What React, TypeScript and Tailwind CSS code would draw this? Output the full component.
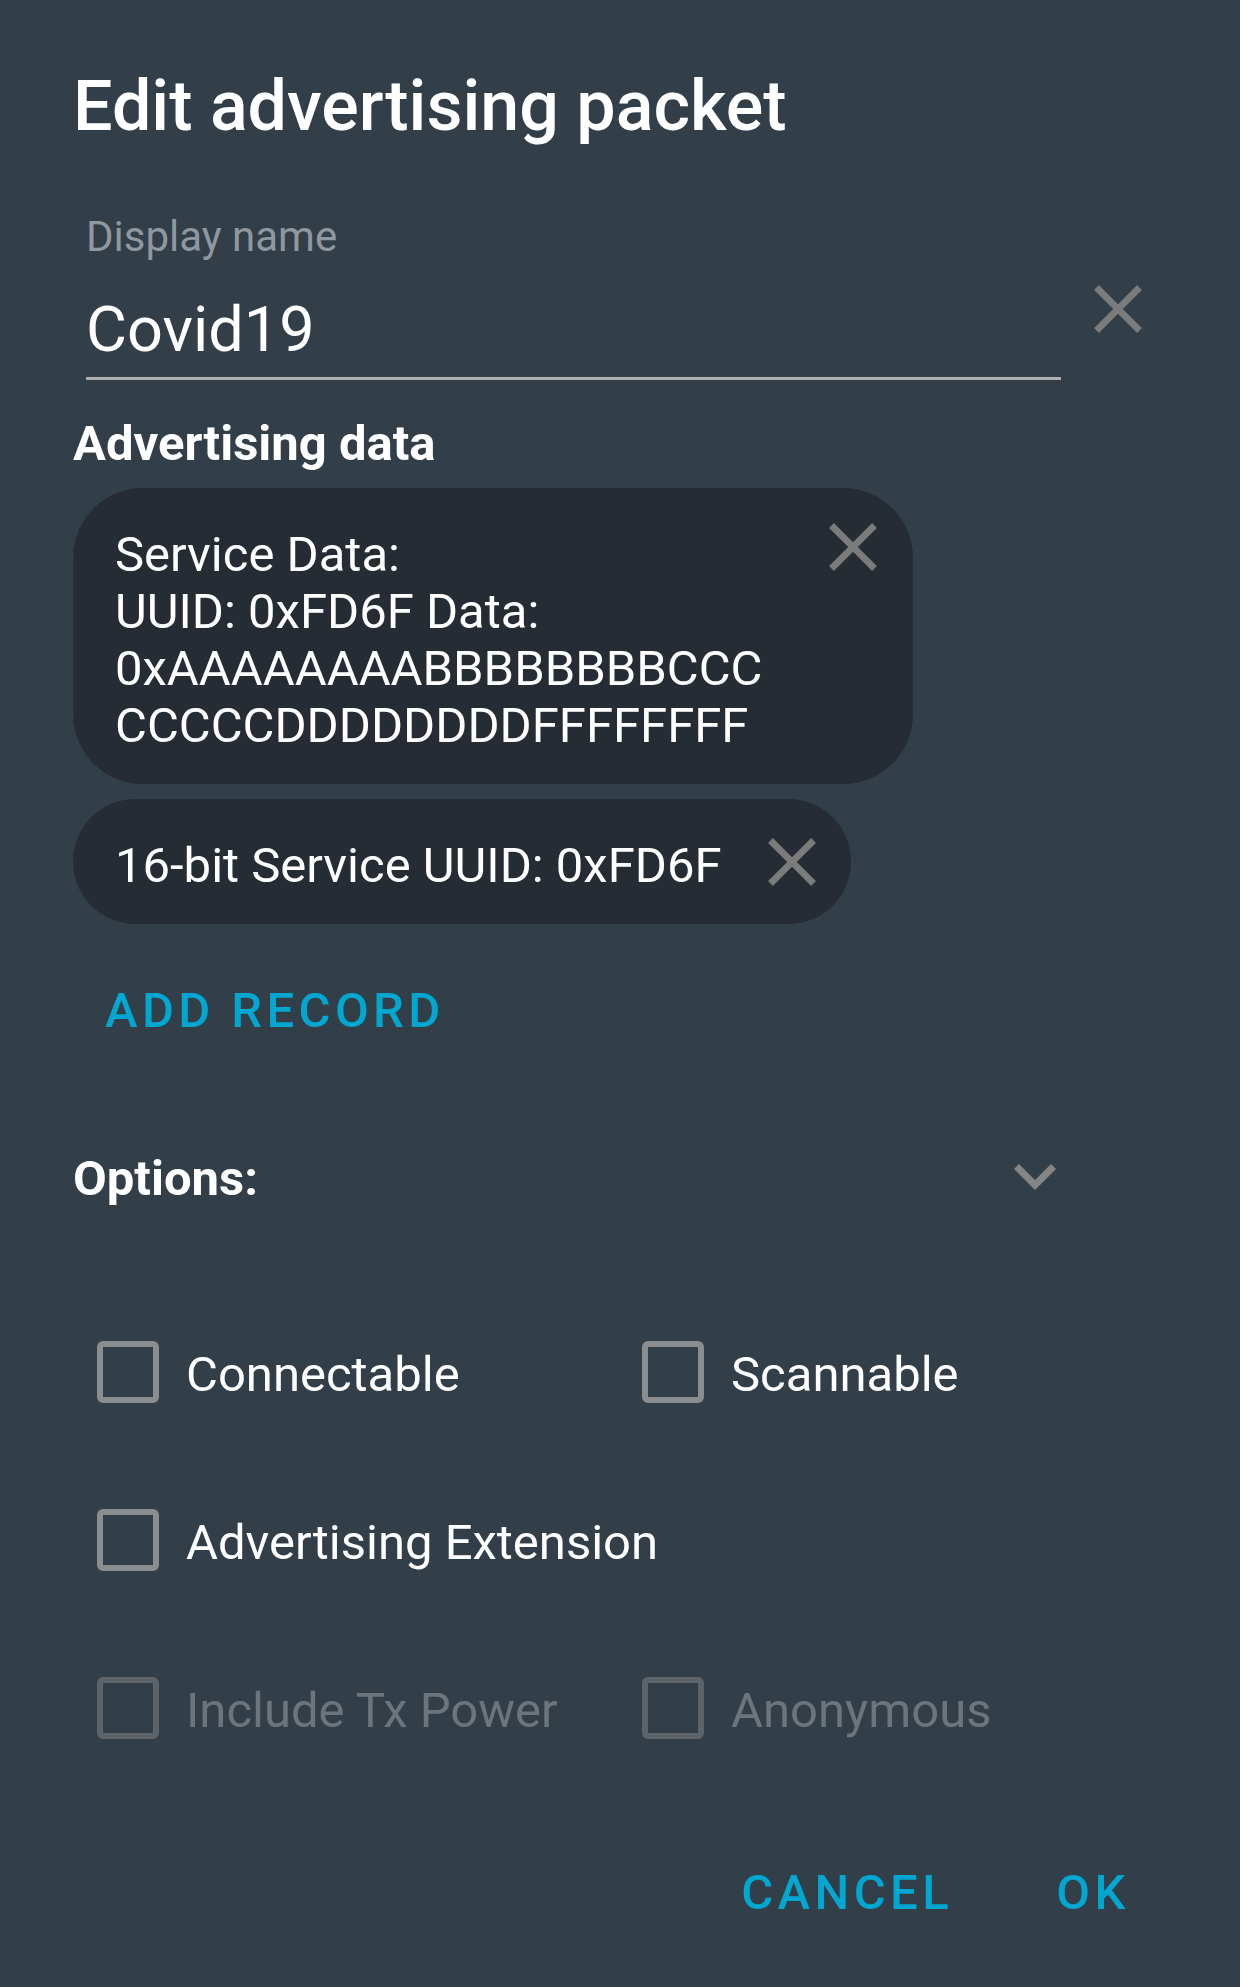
import type { ReactNode } from 'react'

const closePath =
  'M19 6.41L17.59 5 12 10.59 6.41 5 5 6.41 10.59 12 5 17.59 6.41 19 12 13.41 17.59 19 19 17.59 13.41 12z'

function CloseIcon() {
  return (
    <svg viewBox="0 0 24 24" className="h-[82px] w-[82px] flex-none fill-[#7b7b7b]">
      <path d={closePath} />
    </svg>
  )
}

function ExpandIcon() {
  return (
    <svg viewBox="0 0 24 24" className="h-[84px] w-[84px] flex-none fill-[#858585]">
      <path d="M16.59 8.59L12 13.17 7.41 8.59 6 10l6 6 6-6z" />
    </svg>
  )
}

function Check({ label, disabled, wide }: { label: string; disabled?: boolean; wide?: boolean }) {
  return (
    <div className={`flex h-[168px] items-center gap-[27px] ${wide ? 'col-span-2' : ''}`}>
      <span
        className={`block h-[62px] w-[62px] flex-none rounded-[6px] border-[6px] ${
          disabled ? 'border-[#5c6369]' : 'border-[#8b8d8f]'
        }`}
      />
      <span
        className={`mt-[5px] text-[49px] leading-[57px] ${disabled ? 'text-[#6d757c]' : 'text-white'}`}
      >
        {label}
      </span>
    </div>
  )
}

function TextButton({ children, className = '' }: { children: ReactNode; className?: string }) {
  return (
    <button
      type="button"
      className={`text-[49px] leading-[57px] font-medium tracking-[4.4px] text-[#02a7d1] ${className}`}
    >
      {children}
    </button>
  )
}

export default function App() {
  return (
    <div className="min-h-[1987px] w-full bg-[#323e48] font-['Roboto',sans-serif] text-white">
      <div className="flex flex-col pl-[73px] pt-[65px]">
        <h1 className="text-[70px] leading-[82px] font-medium">Edit advertising packet</h1>

        <div className="mt-[66px] flex items-start">
          <div className="ml-[13px] w-[975px] border-b-[3px] border-[#aeaeae]">
            <div className="text-[42px] leading-[48px] text-[#8f979f]">Display name</div>
            <div className="mt-[32px] pb-[11px] text-[63px] leading-[73px]">Covid19</div>
          </div>
          <div className="ml-[16px] mt-[55px]">
            <CloseIcon />
          </div>
        </div>

        <h2 className="mt-[35px] text-[49px] leading-[57px] font-bold">Advertising data</h2>

        <div className="mt-[16px] flex w-[840px] items-start rounded-[70px] bg-[#252c33] pb-[30px] pl-[42px] pr-[19px] pt-[18px]">
          <div className="flex-1 pt-[20px] text-[49px] leading-[57px]">
            <div>Service Data:</div>
            <div>UUID: 0xFD6F Data:</div>
            <div>0xAAAAAAAABBBBBBBBCCC</div>
            <div>CCCCCDDDDDDDDFFFFFFFF</div>
          </div>
          <CloseIcon />
        </div>

        <div className="mt-[15px] flex h-[125px] w-fit items-center rounded-full bg-[#252c33] pl-[42px] pr-[18px]">
          <span className="mt-[8px] text-[49px] leading-[57px]">16-bit Service UUID: 0xFD6F</span>
          <span className="ml-[29px]">
            <CloseIcon />
          </span>
        </div>

        <div className="mt-[58px] ml-[32px]">
          <TextButton>ADD RECORD</TextButton>
        </div>

        <div className="mt-[95px] flex h-[84px] w-[1004px] items-center justify-between">
          <span className="mt-[5px] text-[49px] leading-[57px] font-bold">Options:</span>
          <ExpandIcon />
        </div>

        <div className="ml-[24px] mt-[70px] grid grid-cols-[545px_1fr]">
          <Check label="Connectable" />
          <Check label="Scannable" />
          <Check label="Advertising Extension" wide />
          <Check label="Include Tx Power" disabled />
          <Check label="Anonymous" disabled />
        </div>

        <div className="mt-[72px] flex justify-end pr-[35px]">
          <TextButton className="px-[28px]">CANCEL</TextButton>
          <TextButton className="w-[224px] text-center">OK</TextButton>
        </div>
      </div>
    </div>
  )
}
